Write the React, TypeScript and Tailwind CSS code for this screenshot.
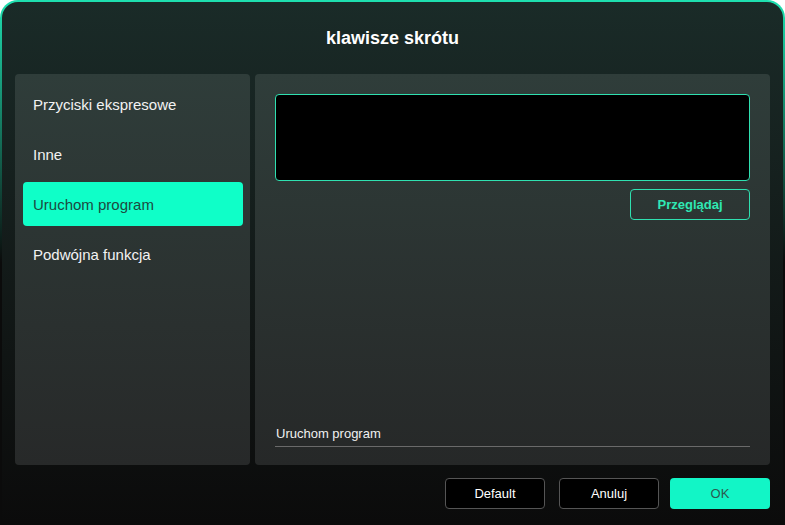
import React, { useState } from "react";

const items = ["Przyciski ekspresowe", "Inne", "Uruchom program", "Podwójna funkcja"];

export default function App() {
  const [active, setActive] = useState(2);

  return (
    <div
      className="w-[785px] h-[525px] rounded-t-[18px] bg-gradient-to-b from-[#1ee0b0] via-[#1a2b28]/0 to-transparent p-[2px] pb-0 bg-[#0b0b0b]"
      style={{ fontFamily: '"Liberation Sans", Arial, sans-serif' }}
    >
      <div className="h-full w-full rounded-t-[16px] bg-gradient-to-b from-[#1a2b28] to-[#0b0b0b] flex flex-col px-[13px]">
        <h1 className="text-white font-bold text-[18px] text-center pt-[25px] pb-[25px] leading-[22px]">
          klawisze skrótu
        </h1>

        <div className="flex gap-[5px] h-[391px]">
          <aside className="w-[235px] rounded-[4px] bg-gradient-to-b from-[#2f3d3a] to-[#272929] px-[8px] pt-[8px] flex flex-col gap-[6px]">
            {items.map((label, i) => (
              <button
                key={label}
                onClick={() => setActive(i)}
                className={
                  "h-[44px] w-[220px] rounded-[4px] px-[10px] pt-[2px] text-left text-[15px] " +
                  (i === active ? "bg-[#0fffc8] text-[#1d4a40]" : "text-[#f2f2f2]")
                }
              >
                {label}
              </button>
            ))}
          </aside>

          <section className="w-[515px] rounded-[4px] bg-gradient-to-b from-[#2f3d3a] to-[#262828] p-[20px] pb-[18px] flex flex-col">
            <div className="h-[87px] rounded-[4px] border border-[#2fe0b0] bg-black" />
            <div className="flex justify-end mt-[8px]">
              <button className="w-[120px] h-[31px] rounded-[4px] border border-[#2fe0b0] text-[#2fe8b4] font-bold text-[13px]">
                Przeglądaj
              </button>
            </div>
            <div className="flex-1" />
            <div className="border-b border-[#6a6a6a] pb-[4px] pl-[1px] text-[13px] text-[#f0f0f0] leading-[16px]">
              Uruchom program
            </div>
          </section>
        </div>

        <div className="flex justify-end mt-[13px]">
          <button className="w-[100px] h-[31px] rounded-[4px] border border-[#555] bg-black text-white text-[13px]">
            Default
          </button>
          <button className="w-[100px] h-[31px] ml-[14px] rounded-[4px] border border-[#555] bg-black text-white text-[13px]">
            Anuluj
          </button>
          <button className="w-[100px] h-[31px] ml-[11px] rounded-[4px] bg-[#12f5c6] text-[#2b5a50] text-[13px]">
            OK
          </button>
        </div>
      </div>
    </div>
  );
}
